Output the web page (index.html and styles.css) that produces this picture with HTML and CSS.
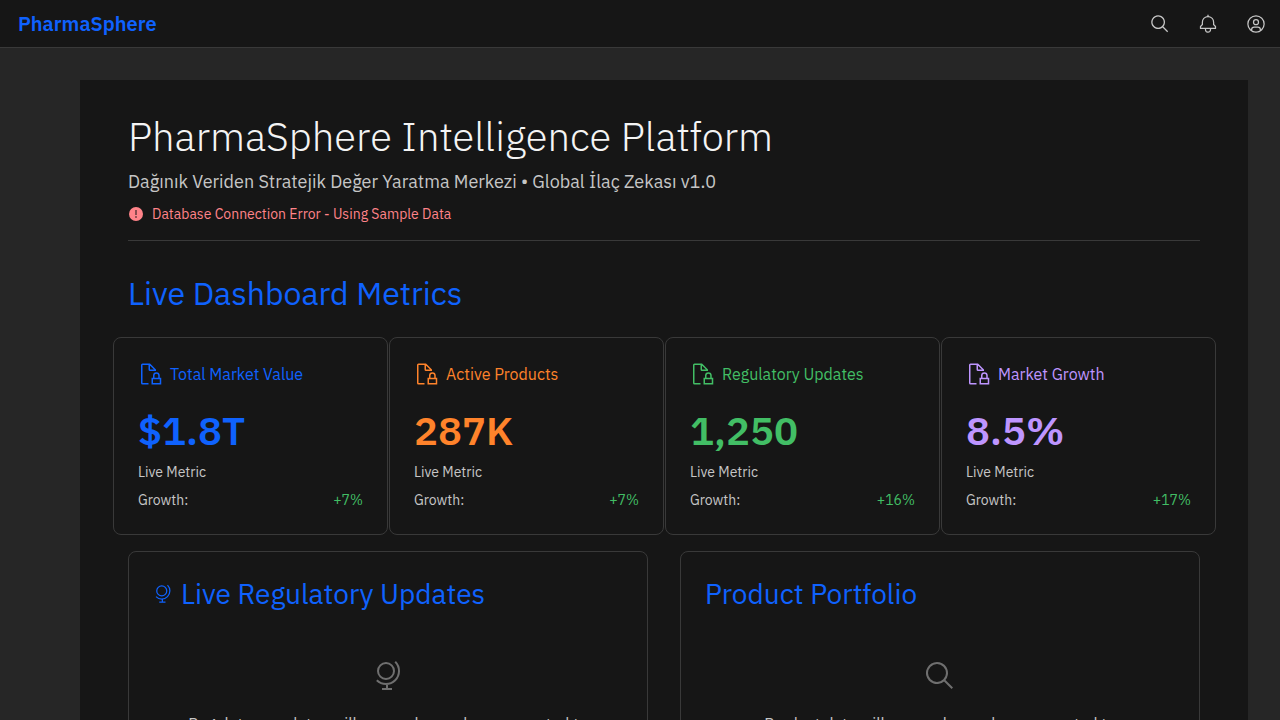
FILE: index.html
```
<!DOCTYPE html>
<html lang="en">
<head>
<meta charset="utf-8">
<meta name="viewport" content="width=device-width, initial-scale=1">
<title>PharmaSphere</title>
<link rel="stylesheet" href="styles.css">
</head>
<body>
<svg class="sprite" aria-hidden="true">
  <symbol id="search" viewBox="0 0 32 32"><path d="M29,27.5859l-7.5521-7.5521a11.0177,11.0177,0,1,0-1.4141,1.4141L27.5859,29ZM4,13a9,9,0,1,1,9,9A9.01,9.01,0,0,1,4,13Z"/></symbol>
  <symbol id="bell" viewBox="0 0 32 32"><path d="M28.7071,19.293,26,16.5859V13a10.0136,10.0136,0,0,0-9-9.9492V1H15V3.0508A10.0136,10.0136,0,0,0,6,13v3.5859L3.2929,19.293A1,1,0,0,0,3,20v3a1,1,0,0,0,1,1h7v.7768a5.152,5.152,0,0,0,4.5,5.1987A5.0057,5.0057,0,0,0,21,25V24h7a1,1,0,0,0,1-1V20A1,1,0,0,0,28.7071,19.293ZM19,25a3,3,0,0,1-6,0V24h6Zm8-3H5V20.4141L7.707,17.707A1,1,0,0,0,8,17V13a8,8,0,0,1,16,0v4a1,1,0,0,0,.293.707L27,20.4141Z"/></symbol>
  <symbol id="avatar" viewBox="0 0 32 32"><path d="M16,8a5,5,0,1,0,5,5A5,5,0,0,0,16,8Zm0,8a3,3,0,1,1,3-3A3.0034,3.0034,0,0,1,16,16Z"/><path d="M16,2A14,14,0,1,0,30,16,14.0158,14.0158,0,0,0,16,2ZM10,26.3765V25a3.0033,3.0033,0,0,1,3-3h6a3.0033,3.0033,0,0,1,3,3v1.3765a11.8989,11.8989,0,0,1-12,0Zm13.9925-1.4507A5.0016,5.0016,0,0,0,19,20H13a5.0016,5.0016,0,0,0-4.9925,4.9258,12,12,0,1,1,15.985,0Z"/></symbol>
  <symbol id="error" viewBox="0 0 16 16"><circle cx="8" cy="8" r="7"/><path class="error-mark" d="M7.5 4h1v5h-1z"/><circle class="error-mark" cx="8" cy="11" r=".8"/></symbol>
  <symbol id="doc-lock" viewBox="0 0 32 32"><path class="line" d="M14 29H6a1 1 0 0 1-1-1V4a1 1 0 0 1 1-1h9.6L23 10.4V11h-7a1 1 0 0 1-1-1V3M19 22h11v7H19zM21 22v-4a3.5 3.5 0 0 1 7 0v4"/></symbol>
  <symbol id="globe" viewBox="0 0 32 32"><circle class="line" cx="14" cy="11" r="8"/><path class="line" d="M23.2 1.8A13 13 0 0 1 4.8 20.2M15 24v5M10 29h10"/></symbol>
</svg>

<header class="topbar">
  <a class="brand" href="#">PharmaSphere</a>
  <nav class="actions" aria-label="Global">
    <button class="action" type="button" aria-label="Search"><svg class="icon-20"><use href="#search"/></svg></button>
    <button class="action" type="button" aria-label="Notifications"><svg class="icon-20"><use href="#bell"/></svg></button>
    <button class="action" type="button" aria-label="User profile"><svg class="icon-20"><use href="#avatar"/></svg></button>
  </nav>
</header>

<main class="content">
  <section class="intro">
    <h1 class="title">PharmaSphere Intelligence Platform</h1>
    <p class="subtitle" lang="tr">Dağınık Veriden Stratejik Değer Yaratma Merkezi • Global İlaç Zekası v1.0</p>
    <p class="status"><svg class="icon-16"><use href="#error"/></svg>Database Connection Error - Using Sample Data</p>
  </section>

  <h2 class="section-title">Live Dashboard Metrics</h2>

  <section class="metrics">
    <article class="metric blue">
      <h3 class="metric-name"><svg class="icon-24"><use href="#doc-lock"/></svg>Total Market Value</h3>
      <p class="metric-value">$1.8T</p>
      <p class="metric-note">Live Metric</p>
      <p class="metric-growth"><span>Growth:</span><span class="gain">+7%</span></p>
    </article>
    <article class="metric orange">
      <h3 class="metric-name"><svg class="icon-24"><use href="#doc-lock"/></svg>Active Products</h3>
      <p class="metric-value">287K</p>
      <p class="metric-note">Live Metric</p>
      <p class="metric-growth"><span>Growth:</span><span class="gain">+7%</span></p>
    </article>
    <article class="metric green">
      <h3 class="metric-name"><svg class="icon-24"><use href="#doc-lock"/></svg>Regulatory Updates</h3>
      <p class="metric-value">1,250</p>
      <p class="metric-note">Live Metric</p>
      <p class="metric-growth"><span>Growth:</span><span class="gain">+16%</span></p>
    </article>
    <article class="metric purple">
      <h3 class="metric-name"><svg class="icon-24"><use href="#doc-lock"/></svg>Market Growth</h3>
      <p class="metric-value">8.5%</p>
      <p class="metric-note">Live Metric</p>
      <p class="metric-growth"><span>Growth:</span><span class="gain">+17%</span></p>
    </article>
  </section>

  <section class="panels">
    <article class="panel">
      <h3 class="panel-title"><svg class="icon-20"><use href="#globe"/></svg>Live Regulatory Updates</h3>
      <div class="empty">
        <svg class="icon-32"><use href="#globe"/></svg>
        <p class="empty-text">Regulatory updates will appear here when connected to database</p>
      </div>
    </article>
    <article class="panel">
      <h3 class="panel-title">Product Portfolio</h3>
      <div class="empty">
        <svg class="icon-32"><use href="#search"/></svg>
        <p class="empty-text">Product data will appear here when connected to database</p>
      </div>
    </article>
  </section>
</main>
</body>
</html>
```
FILE: styles.css
```
* { box-sizing: border-box; }

body {
  margin: 0;
  background: #262626;
  color: #c6c6c6;
  font-family: "IBM Plex Sans", Roboto, "Liberation Sans", sans-serif;
  font-size: 14px;
  line-height: 20px;
}

h1, h2, h3, p { margin: 0; font-weight: 400; }

svg { fill: currentColor; flex: none; }
.sprite { display: none; }
.line { fill: none; stroke: currentColor; stroke-width: 2; }
.error-mark { fill: #161616; }
.icon-16 { width: 16px; height: 16px; }
.icon-20 { width: 20px; height: 20px; }
.icon-24 { width: 24px; height: 24px; }
.icon-32 { width: 32px; height: 32px; }

.topbar {
  display: flex;
  align-items: center;
  justify-content: space-between;
  height: 48px;
  padding-left: 18px;
  background: #161616;
  border-bottom: 1px solid #393939;
}
.brand {
  color: #0f62fe;
  font-size: 20px;
  font-weight: 600;
  line-height: 24px;
  text-decoration: none;
}
.actions { display: flex; }
.action {
  display: flex;
  align-items: center;
  justify-content: center;
  width: 48px;
  height: 48px;
  padding: 0;
  border: 0;
  background: transparent;
  color: #c6c6c6;
}

.content {
  margin: 32px 32px 0 80px;
  padding: 32px 48px;
  background: #161616;
}

.intro {
  padding-bottom: 14px;
  border-bottom: 1px solid #393939;
}
.title {
  color: #f4f4f4;
  font-size: 40px;
  font-weight: 300;
  line-height: 48px;
}
.subtitle {
  margin-top: 10px;
  font-size: 18px;
  line-height: 24px;
}
.status {
  display: flex;
  align-items: center;
  gap: 8px;
  margin-top: 8px;
  color: #ff8389;
  line-height: 24px;
}

.section-title {
  margin: 32px 0 24px;
  color: #0f62fe;
  font-size: 32px;
  line-height: 40px;
}

.metrics {
  display: grid;
  grid-template-columns: repeat(4, 1fr);
  gap: 1px;
  margin: 0 -16px;
  padding-left: 1px;
}
.metric {
  padding: 24px;
  border: 1px solid #393939;
  border-radius: 8px;
}
.metric-name {
  display: flex;
  align-items: center;
  gap: 8px;
  font-size: 16px;
  line-height: 24px;
}
.metric-value {
  margin: 20px 0 8px;
  font-size: 40px;
  font-weight: 600;
  line-height: 48px;
}
.metric-growth {
  display: flex;
  justify-content: space-between;
  margin-top: 8px;
}
.gain { color: #42be65; }

.blue .metric-name, .blue .metric-value { color: #0f62fe; }
.orange .metric-name, .orange .metric-value { color: #ff832b; }
.green .metric-name, .green .metric-value { color: #42be65; }
.purple .metric-name, .purple .metric-value { color: #be95ff; }

.panels {
  display: grid;
  grid-template-columns: repeat(2, 1fr);
  gap: 32px;
  margin-top: 16px;
}
.panel {
  padding: 24px;
  border: 1px solid #393939;
  border-radius: 8px;
}
.panel-title {
  display: flex;
  align-items: center;
  gap: 8px;
  color: #0f62fe;
  font-size: 28px;
  line-height: 36px;
}
.empty {
  display: flex;
  flex-direction: column;
  align-items: center;
  padding: 48px 32px;
  color: #6f6f6f;
}
.empty-text {
  margin-top: 20px;
  color: #c6c6c6;
  font-size: 16px;
  line-height: 24px;
  text-align: center;
}
```
